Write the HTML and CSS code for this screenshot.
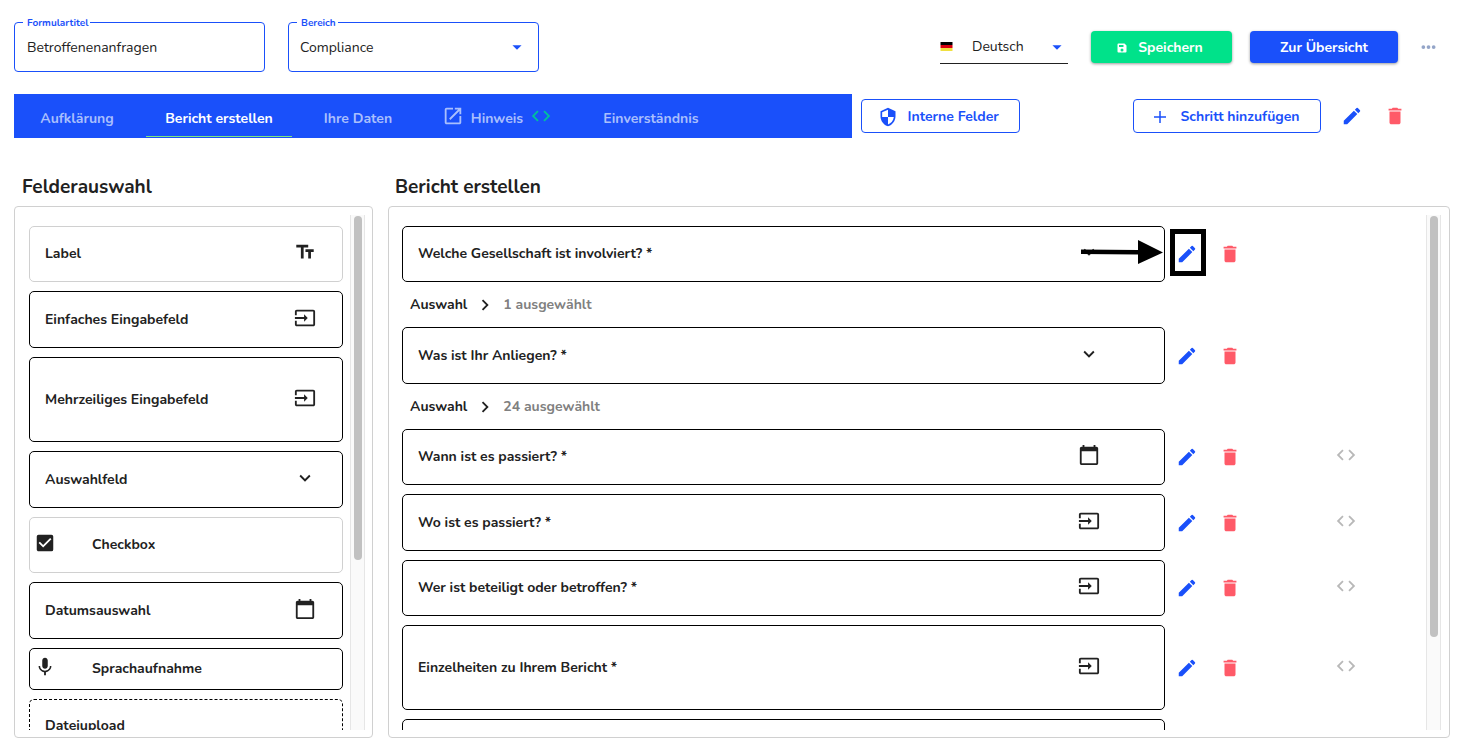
FILE: index.html
```html
<!DOCTYPE html>
<html lang="de">
<head>
<meta charset="utf-8">
<title>Formular bearbeiten</title>
<meta name="viewport" content="width=device-width, initial-scale=1">
<link rel="stylesheet" href="styles.css">
</head>
<body>
<svg class="sprite" aria-hidden="true">
  <symbol id="pencil" viewBox="0 0 24 24"><path d="M3 17.25V21h3.75L17.81 9.94l-3.75-3.75L3 17.25zM20.71 7.04c.39-.39.39-1.02 0-1.41l-2.34-2.34a1 1 0 0 0-1.41 0l-1.83 1.83 3.75 3.75 1.83-1.83z"/></symbol>
  <symbol id="trash" viewBox="0 0 24 24"><path d="M6 19c0 1.100.9 2 2 2h8c1.100 0 2-.9 2-2V7H6v12zM19 4h-3.500l-1-1h-5l-1 1H5v2h14V4z"/></symbol>
  <symbol id="code" viewBox="0 0 24 24"><path d="M9.400 16.600 4.800 12l4.600-4.600L8 6l-6 6 6 6 1.400-1.400zm5.200 0 4.600-4.600-4.600-4.600L16 6l6 6-6 6-1.400-1.400z"/></symbol>
  <symbol id="input" viewBox="0 0 24 24"><path d="M21 3H3c-1.100 0-2 .9-2 2v4h2V5h18v14H3v-4H1v4c0 1.100.9 2 2 2h18c1.100 0 2-.9 2-2V5c0-1.100-.9-2-2-2zM11 16l4-4-4-4v3H1v2h10v3z"/></symbol>
  <symbol id="date" viewBox="0 0 24 24"><path d="M20 3h-1V1h-2v2H7V1H5v2H4c-1.100 0-2 .9-2 2v16c0 1.100.9 2 2 2h16c1.100 0 2-.9 2-2V5c0-1.100-.9-2-2-2zm0 18H4V8h16v13z"/></symbol>
  <symbol id="down" viewBox="0 0 24 24"><path d="M7.410 8.590 12 13.170l4.590-4.580L18 10l-6 6-6-6z"/></symbol>
  <symbol id="right" viewBox="0 0 24 24"><path d="M8.590 16.590 13.170 12 8.590 7.410 10 6l6 6-6 6z"/></symbol>
  <symbol id="letters" viewBox="0 0 24 24"><path d="M2.500 4v3h5v12h3V7h5V4h-13zm19 5h-9v3h3v7h3v-7h3V9z"/></symbol>
  <symbol id="checked" viewBox="0 0 24 24"><path d="M19 3H5a2 2 0 0 0-2 2v14c0 1.100.9 2 2 2h14a2 2 0 0 0 2-2V5a2 2 0 0 0-2-2zm-9 14-5-5 1.410-1.410L10 14.170l7.590-7.590L19 8l-9 9z"/></symbol>
  <symbol id="mic" viewBox="0 0 24 24"><path d="M12 14c1.660 0 3-1.340 3-3V5c0-1.660-1.340-3-3-3S9 3.340 9 5v6c0 1.660 1.340 3 3 3zm5.300-3c0 3-2.540 5.100-5.300 5.100S6.700 14 6.700 11H5c0 3.410 2.720 6.230 6 6.720V21h2v-3.280c3.280-.48 6-3.300 6-6.720h-1.700z"/></symbol>
  <symbol id="open" viewBox="0 0 24 24"><path d="M19 19H5V5h7V3H5a2 2 0 0 0-2 2v14c0 1.100.9 2 2 2h14c1.100 0 2-.9 2-2v-7h-2v7zM14 3v2h3.590l-9.830 9.830 1.410 1.410L19 6.410V10h2V3h-7z"/></symbol>
  <symbol id="shield" viewBox="0 0 24 24"><path d="M12 1 3 5v6c0 5.550 3.840 10.740 9 12 5.160-1.260 9-6.450 9-12V5l-9-4zm0 11h7c-.53 4.120-3.280 7.790-7 8.940V12H5V6.300l7-3.110v8.800z"/></symbol>
  <symbol id="plus" viewBox="0 0 24 24"><path d="M20 13h-7v7h-2v-7H4v-2h7V4h2v7h7z"/></symbol>
  <symbol id="caret" viewBox="0 0 24 24"><path d="M7 10l5 5 5-5z"/></symbol>
  <symbol id="save" viewBox="0 0 24 24"><path fill-rule="evenodd" d="M17 3H5a2 2 0 0 0-2 2v14a2 2 0 0 0 2 2h14a2 2 0 0 0 2-2V7l-4-4zM6 6h9v4H6V6zm6 7a3 3 0 1 1 0 6 3 3 0 0 1 0-6z"/></symbol>
</svg>

<header class="top">
  <div class="outlined">
    <label for="title">Formulartitel</label>
    <input id="title" type="text" value="Betroffenenanfragen">
  </div>
  <div class="outlined">
    <label for="area">Bereich</label>
    <select id="area"><option>Compliance</option></select>
    <svg class="icon caret"><use href="#caret"/></svg>
  </div>
  <div class="top-actions">
    <div class="language">
      <svg class="flag" viewBox="0 0 12 9"><path fill="#000" d="M0 0h12v3H0z"/><path fill="#d8000f" d="M0 3h12v3H0z"/><path fill="#f0e040" d="M0 6h12v3H0z"/></svg>
      <select aria-label="Sprache"><option>Deutsch</option></select>
      <svg class="icon caret"><use href="#caret"/></svg>
    </div>
    <button class="btn btn-save"><svg class="icon-small"><use href="#save"/></svg>Speichern</button>
    <button class="btn btn-primary">Zur Übersicht</button>
    <button class="icon-btn more" aria-label="Mehr"><svg class="dots" viewBox="0 0 16 4"><circle cx="2.500" cy="2" r="2"/><circle cx="8" cy="2" r="2"/><circle cx="13.500" cy="2" r="2"/></svg></button>
  </div>
</header>

<div class="steps">
  <nav class="tabs">
    <button class="tab tab-1">Aufklärung</button>
    <button class="tab tab-2 active">Bericht erstellen</button>
    <button class="tab tab-3">Ihre Daten</button>
    <button class="tab tab-4"><svg class="icon"><use href="#open"/></svg>Hinweis<svg class="icon condition"><use href="#code"/></svg></button>
    <button class="tab tab-5">Einverständnis</button>
  </nav>
  <button class="btn btn-outline internal"><svg class="icon"><use href="#shield"/></svg>Interne Felder</button>
  <div class="step-actions">
    <button class="btn btn-outline add"><svg class="icon-mid"><use href="#plus"/></svg>Schritt hinzufügen</button>
    <button class="icon-btn edit" aria-label="Schritt bearbeiten"><svg class="icon"><use href="#pencil"/></svg></button>
    <button class="icon-btn delete" aria-label="Schritt löschen"><svg class="icon"><use href="#trash"/></svg></button>
  </div>
</div>

<main class="columns">
  <section class="column palette">
    <h2>Felderauswahl</h2>
    <div class="panel">
      <div class="items">
        <div class="field plain"><span>Label</span><i><svg class="icon"><use href="#letters"/></svg></i></div>
        <div class="field"><span>Einfaches Eingabefeld</span><i><svg class="icon"><use href="#input"/></svg></i></div>
        <div class="field tall"><span>Mehrzeiliges Eingabefeld</span><i><svg class="icon"><use href="#input"/></svg></i></div>
        <div class="field"><span>Auswahlfeld</span><i><svg class="icon"><use href="#down"/></svg></i></div>
        <div class="field plain lead"><i><svg class="icon"><use href="#checked"/></svg></i><span>Checkbox</span></div>
        <div class="field"><span>Datumsauswahl</span><i><svg class="icon"><use href="#date"/></svg></i></div>
        <div class="field short lead"><i><svg class="icon"><use href="#mic"/></svg></i><span>Sprachaufnahme</span></div>
        <div class="field dashed"><span>Dateiupload</span></div>
      </div>
      <div class="scrollbar"><div class="thumb"></div></div>
    </div>
  </section>

  <section class="column form">
    <h2>Bericht erstellen</h2>
    <div class="panel">
      <div class="items">
        <div class="row">
          <div class="field compact"><span>Welche Gesellschaft ist involviert? *</span><i><svg class="icon"><use href="#down"/></svg></i></div>
          <button class="icon-btn edit marked" aria-label="Bearbeiten"><svg class="icon"><use href="#pencil"/></svg>
            <svg class="arrow" viewBox="0 0 82 26"><path d="M0 10.500 57 11V1l25 12.500L57 25V15.500L0 15z"/></svg></button>
          <button class="icon-btn delete" aria-label="Löschen"><svg class="icon"><use href="#trash"/></svg></button>
        </div>
        <div class="choice">Auswahl<svg class="icon"><use href="#right"/></svg><span>1 ausgewählt</span></div>
        <div class="row">
          <div class="field"><span>Was ist Ihr Anliegen? *</span><i><svg class="icon"><use href="#down"/></svg></i></div>
          <button class="icon-btn edit" aria-label="Bearbeiten"><svg class="icon"><use href="#pencil"/></svg></button>
          <button class="icon-btn delete" aria-label="Löschen"><svg class="icon"><use href="#trash"/></svg></button>
        </div>
        <div class="choice">Auswahl<svg class="icon"><use href="#right"/></svg><span>24 ausgewählt</span></div>
        <div class="row">
          <div class="field compact"><span>Wann ist es passiert? *</span><i><svg class="icon"><use href="#date"/></svg></i></div>
          <button class="icon-btn edit" aria-label="Bearbeiten"><svg class="icon"><use href="#pencil"/></svg></button>
          <button class="icon-btn delete" aria-label="Löschen"><svg class="icon"><use href="#trash"/></svg></button>
          <button class="icon-btn rule" aria-label="Bedingung"><svg class="icon"><use href="#code"/></svg></button>
        </div>
        <div class="row">
          <div class="field"><span>Wo ist es passiert? *</span><i><svg class="icon"><use href="#input"/></svg></i></div>
          <button class="icon-btn edit" aria-label="Bearbeiten"><svg class="icon"><use href="#pencil"/></svg></button>
          <button class="icon-btn delete" aria-label="Löschen"><svg class="icon"><use href="#trash"/></svg></button>
          <button class="icon-btn rule" aria-label="Bedingung"><svg class="icon"><use href="#code"/></svg></button>
        </div>
        <div class="row">
          <div class="field compact"><span>Wer ist beteiligt oder betroffen? *</span><i><svg class="icon"><use href="#input"/></svg></i></div>
          <button class="icon-btn edit" aria-label="Bearbeiten"><svg class="icon"><use href="#pencil"/></svg></button>
          <button class="icon-btn delete" aria-label="Löschen"><svg class="icon"><use href="#trash"/></svg></button>
          <button class="icon-btn rule" aria-label="Bedingung"><svg class="icon"><use href="#code"/></svg></button>
        </div>
        <div class="row">
          <div class="field tall"><span>Einzelheiten zu Ihrem Bericht *</span><i><svg class="icon"><use href="#input"/></svg></i></div>
          <button class="icon-btn edit" aria-label="Bearbeiten"><svg class="icon"><use href="#pencil"/></svg></button>
          <button class="icon-btn delete" aria-label="Löschen"><svg class="icon"><use href="#trash"/></svg></button>
          <button class="icon-btn rule" aria-label="Bedingung"><svg class="icon"><use href="#code"/></svg></button>
        </div>
        <div class="row"><div class="field"></div></div>
      </div>
      <div class="scrollbar"><div class="thumb"></div></div>
    </div>
  </section>
</main>
</body>
</html>
```
FILE: styles.css
```css
:root {
  --blue: #1a50fa;
  --ink: #212121;
  --line: #d0d0d0;
}

*, *::before { box-sizing: border-box; }

body {
  margin: 0;
  height: 100vh;
  padding: 22px 17px 12px 14px;
  display: flex;
  flex-direction: column;
  overflow: hidden;
  background: #fff;
  color: var(--ink);
  font: 14px/20px Nunito, "Open Sans", "Noto Sans", sans-serif;
}

button, input, select { font: inherit; color: inherit; }
button { padding: 0; border: 0; background: none; cursor: pointer; }
svg { flex: none; fill: currentColor; }

.sprite { display: none; }
.icon { width: 22px; height: 22px; }
.icon-mid { width: 18px; height: 18px; }
.icon-small { width: 12px; height: 12px; }

/* Header */
.top {
  display: flex;
  gap: 23px;
  height: 50px;
  flex: none;
}

.outlined { position: relative; width: 251px; }

.outlined label {
  position: absolute;
  top: -6px;
  left: 9px;
  padding: 0 2px 0 4px;
  background: #fff;
  color: var(--blue);
  font-size: 10px;
  line-height: 14px;
  font-weight: 700;
}

.outlined input,
.outlined select {
  width: 100%;
  height: 50px;
  padding: 0 12px;
  border: 1px solid var(--blue);
  border-radius: 4px;
  background: #fff;
  appearance: none;
}

.outlined select { padding: 2px 11px 0; }

.caret {
  position: absolute;
  top: 14px;
  right: 11px;
  color: var(--blue);
  pointer-events: none;
}

.top-actions {
  margin-left: auto;
  padding-right: 10px;
  display: flex;
  align-items: center;
}

.language {
  position: relative;
  display: flex;
  align-items: center;
  width: 128px;
  height: 34px;
  margin-right: 23px;
  border-bottom: 1px solid var(--ink);
}

.language .caret { top: 6px; right: 0; }
.flag { width: 13px; height: 9px; }

.language select {
  flex: 1;
  min-width: 0;
  height: 30px;
  padding: 0 0 0 19px;
  border: 0;
  background: none;
  appearance: none;
}

.btn {
  display: inline-flex;
  align-items: center;
  justify-content: center;
  padding-top: 1px;
  border-radius: 4px;
  font-weight: 700;
  white-space: nowrap;
}

.btn-save,
.btn-primary {
  height: 32px;
  color: #fff;
  box-shadow: 0 1px 3px rgba(0, 0, 0, .4);
}

.btn-save { width: 141px; gap: 10px; padding-right: 4px; margin-right: 18px; background: #00e28a; }
.btn-primary { width: 148px; margin-right: 18px; background: var(--blue); }

.icon-btn {
  display: flex;
  flex: none;
  align-items: center;
  justify-content: center;
  width: 24px;
  height: 32px;
}

.edit { color: var(--blue); }
.delete { color: #ff5a68; }
.more { color: #94a5c8; }
.dots { width: 15px; height: 4px; }

/* Step navigation */
.steps {
  display: flex;
  align-items: center;
  height: 44px;
  flex: none;
  margin-top: 22px;
}

.tabs {
  display: flex;
  gap: 6px;
  width: calc(100% * 7 / 12);
  height: 44px;
  background: var(--blue);
}

.tab {
  display: flex;
  align-items: center;
  justify-content: center;
  height: 43px;
  padding-top: 7px;
  border-bottom: 1px solid transparent;
  color: #a9bffd;
  font-weight: 700;
  white-space: nowrap;
}

.tab.active { color: #fff; border-bottom-color: #7fe67f; }
.tab-1 { width: 126px; }
.tab-2, .tab-4 { width: 146px; }
.tab-3 { width: 120px; }
.tab-5 { width: 150px; }
.tab-4 { gap: 7px; }
.tab .icon { margin-bottom: 5px; }
.condition { color: #00c19c; }

.btn-outline {
  height: 34px;
  gap: 10px;
  padding-right: 4px;
  border: 1px solid var(--blue);
  color: var(--blue);
}

.internal { width: 159px; margin-left: 9px; }
.internal .icon { width: 20px; height: 20px; }
.add { width: 188px; gap: 12px; }

.step-actions {
  display: flex;
  align-items: center;
  gap: 19px;
  margin-left: auto;
  padding-right: 43px;
}

/* Panels */
.columns {
  display: flex;
  gap: 15px;
  flex: 1;
  min-height: 0;
  margin-top: 37px;
}

.column { display: flex; flex-direction: column; min-width: 0; }
.palette { width: 25%; }
.form { flex: 1; }

h2 {
  margin: 0;
  padding: 0 7px 6px;
  font-size: 19px;
  line-height: 25px;
  font-weight: 700;
}

.palette h2 { padding-left: 8px; }

.panel {
  display: flex;
  flex: 1;
  min-height: 0;
  padding: 8px 7px 7px 14px;
  border: 1px solid var(--line);
  border-radius: 4px;
}

.form .panel { padding: 8px 8px 7px 13px; }

.items {
  display: flex;
  flex-direction: column;
  gap: 9px;
  flex: 1;
  min-width: 0;
  padding: 11px 7px 0 0;
  overflow: hidden;
}

.scrollbar {
  width: 15px;
  padding: 1px 3px;
  background: #fafafa;
  border: solid #e6e6e6;
  border-width: 0 1px;
}

.thumb { height: 67%; width: 8px; border-radius: 4px; background: #c1c1c1; }
.form .thumb { height: 82%; }

/* Fields */
.field {
  display: flex;
  align-items: center;
  flex: none;
  height: 57px;
  padding-left: 15px;
  border: 1px solid #000;
  border-radius: 5px;
  font-weight: 700;
}

.field i {
  display: flex;
  justify-content: center;
  width: 25%;
  margin-left: auto;
  padding-bottom: 4px;
}

.form .field i { width: 20%; }
.field.plain { height: 56px; border-color: var(--line); }
.field.compact { height: 56px; }
.field.tall { height: 85px; }
.field.short { height: 42px; }
.field.dashed { border-style: dashed; padding-bottom: 4px; }
.field.lead { padding-left: 4px; gap: 36px; }
.field.lead i { width: 22px; margin: 0; }

.row { display: flex; align-items: center; flex: none; }
.row .field { width: 75%; }
.row .edit { margin-left: 10px; }
.row .delete { margin-left: 19px; }
.row .rule { margin-left: 92px; padding-bottom: 4px; color: #b8b8b8; }

.marked { position: relative; }

.marked::before {
  content: "";
  position: absolute;
  top: -9px;
  left: -5px;
  width: 36px;
  height: 47px;
  border: 5px solid #000;
}

.arrow {
  position: absolute;
  top: 1px;
  right: 36px;
  width: 82px;
  height: 26px;
  color: #000;
}

.choice {
  display: flex;
  align-items: center;
  flex: none;
  height: 27px;
  padding-left: 8px;
  font-weight: 700;
}

.choice .icon { margin: 0 7px; }
.choice span { color: #808080; }
```
